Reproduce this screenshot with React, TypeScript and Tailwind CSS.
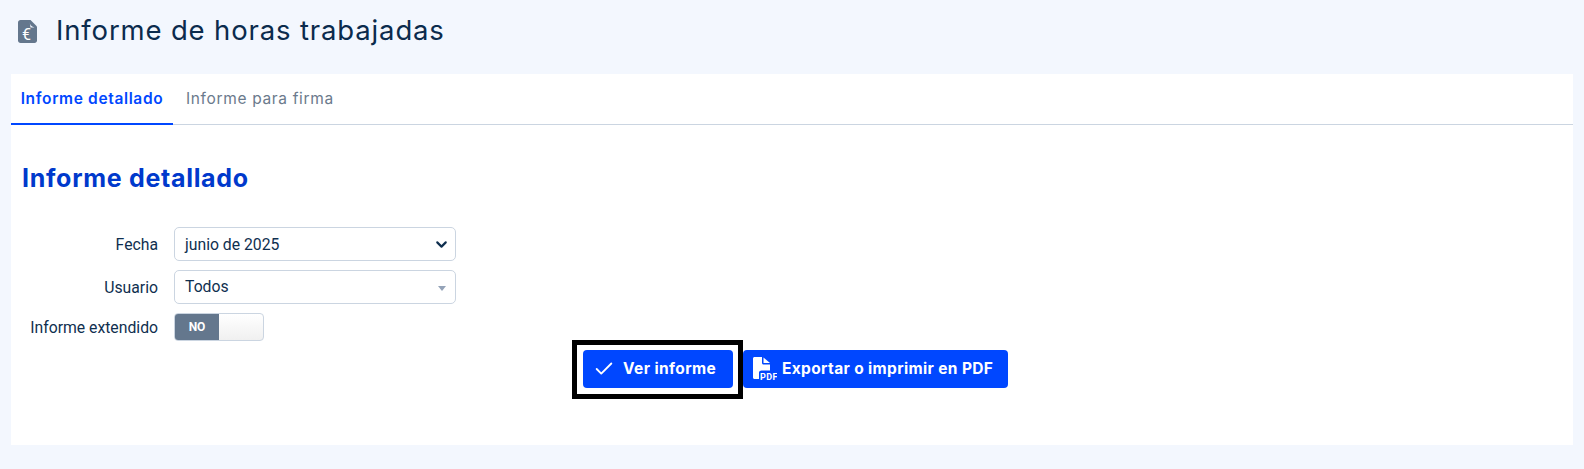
import { Check, ChevronDown } from "lucide-react";

const heading = { fontFamily: '"Inter", "Open Sans", sans-serif' };

function EuroFileIcon() {
  return (
    <svg width="19" height="23" viewBox="0 0 19 23" className="shrink-0">
      <path d="M2.5 0H12.5L19 6.5V20.5C19 21.9 17.9 23 16.5 23H2.5C1.1 23 0 21.9 0 20.5V2.5C0 1.1 1.1 0 2.5 0Z" fill="#64778d" />
      <path d="M11.5 1.5C11.5 4.5 13 6.5 16.5 7.5L12.5 7.5Z" fill="#f3f7fe" />
      <text x="8.5" y="20" textAnchor="middle" fontSize="16" fontWeight="400" fill="#fff" fontFamily="Roboto, sans-serif">€</text>
    </svg>
  );
}

function PdfIcon() {
  return (
    <svg width="24" height="24" viewBox="0 0 24 24" className="shrink-0">
      <path d="M1.5 0H9V6C9 6.8 9.7 7.5 10.5 7.5H17V13.5H8.5C7.4 13.5 6 14.4 6 15.5V22H1.5C.7 22 0 21.3 0 20.5V1.5C0 .7.7 0 1.5 0Z" fill="#fff" />
      <path d="M10.5 0.5L17 6H10.5Z" fill="#fff" />
      <text x="7" y="22.5" fontSize="9" fontWeight="700" letterSpacing="0.4" fill="#fff" fontFamily="Roboto, sans-serif">PDF</text>
    </svg>
  );
}

function FieldRow({ label, children }: { label: string; children: React.ReactNode }) {
  return (
    <div className="flex items-center">
      <label className="w-[147px] shrink-0 pt-[2px] text-right text-[15.75px] text-[#0f2f4f]">{label}</label>
      <div className="ml-[16px]">{children}</div>
    </div>
  );
}

export default function App() {
  return (
    <div className="h-[469px] overflow-hidden bg-[#f3f7fe] px-[11px] text-[#0f2f4f]" style={{ fontFamily: '"Roboto", sans-serif' }}>
      <header className="flex h-[74px] items-center pb-[12px] pl-[7px]">
        <EuroFileIcon />
        <h1 className="ml-[19px] text-[27.5px] font-normal tracking-[0.85px] text-[#0b2b4d]" style={heading}>
          Informe de horas trabajadas
        </h1>
      </header>

      <main className="h-[371px] bg-white">
        <nav className="flex h-[51px] border-b border-[#cbd5e1]">
          <a className="-mb-px flex w-[162px] items-center justify-center border-b-2 border-[#0047ff] text-[15.5px] font-semibold tracking-[0.65px] text-[#0047ff]" style={heading}>
            Informe detallado
          </a>
          <a className="flex items-center pl-[13px] text-[15.5px] tracking-[0.65px] text-[#6b7a8c]" style={heading}>
            Informe para firma
          </a>
        </nav>

        <section className="pl-[11px] pt-[38px]">
          <h2 className="text-[25px] font-bold leading-[30px] tracking-[0.7px] text-[#0039cc]" style={heading}>
            Informe detallado
          </h2>

          <div className="-ml-[11px] mt-[34px] flex flex-col gap-[9px]">
            <FieldRow label="Fecha">
              <div className="flex h-[34px] w-[282px] items-center justify-between rounded-[5px] border border-[#cbd5e1] bg-white pl-[10px] pr-[5px] text-[15.75px]">
                <span className="mt-[2px]">junio de 2025</span>
                <ChevronDown size={17} strokeWidth={3} className="text-[#0f2f4f]" />
              </div>
            </FieldRow>
            <FieldRow label="Usuario">
              <div className="flex h-[34px] w-[282px] items-center justify-between rounded-[5px] border border-[#cbd5e1] bg-white pl-[10px] pr-[9px] text-[15.75px]">
                <span>Todos</span>
                <span className="mt-[3px] border-x-[4px] border-t-[5px] border-x-transparent border-t-[#94a3b8]" />
              </div>
            </FieldRow>
            <FieldRow label="Informe extendido">
              <div className="flex h-[28px] w-[90px] overflow-hidden rounded-[4px] border border-[#cbd5e1] bg-gradient-to-b from-white to-[#f0f0f0]">
                <span className="flex w-[44px] items-center justify-center bg-[#64778d] text-[12px] font-bold text-white">NO</span>
              </div>
            </FieldRow>
          </div>

          <div className="mt-[9px] ml-[561px] flex items-center text-white" style={heading}>
            <div className="relative">
              <button className="flex h-[38px] w-[150px] items-center gap-[8px] rounded-[4px] bg-[#0047ff] pl-[10px] text-[15.5px] font-bold tracking-[0.4px]">
                <Check size={22} strokeWidth={2} />
                Ver informe
              </button>
              <span className="absolute -bottom-[11px] -left-[11px] -right-[10px] -top-[10px] border-[5px] border-black" />
            </div>
            <button className="ml-[10px] flex h-[38px] w-[265px] items-center gap-[5px] rounded-[4px] bg-[#0047ff] pl-[10px] text-[15.5px] font-bold tracking-[0.35px]">
              <PdfIcon />
              Exportar o imprimir en PDF
            </button>
          </div>
        </section>
      </main>
    </div>
  );
}
